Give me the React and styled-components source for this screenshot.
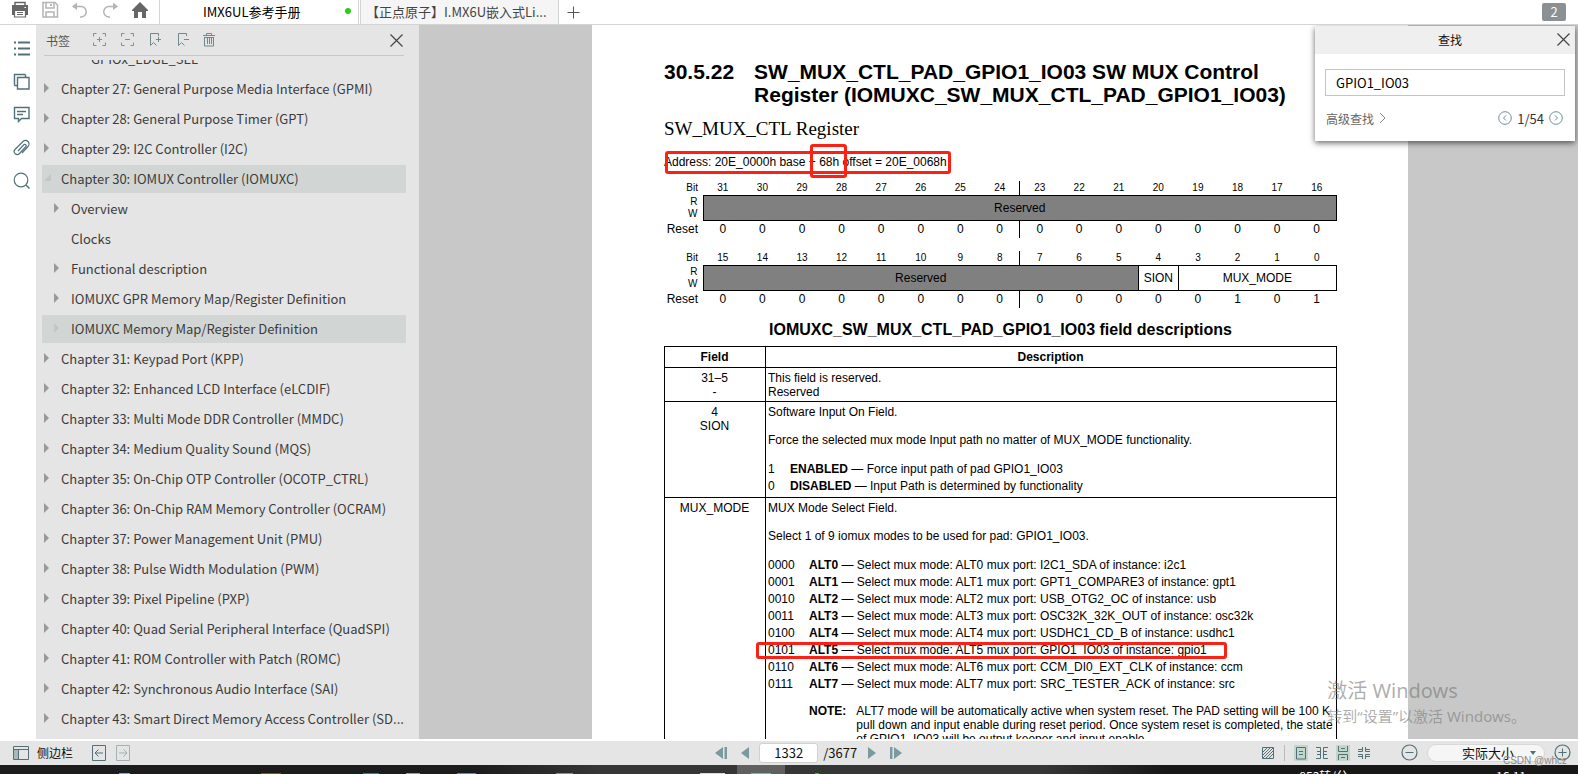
import styled, { createGlobalStyle } from 'styled-components';

const GlobalStyle = createGlobalStyle`
  * { box-sizing: border-box; }

  body {
    margin: 0;
    overflow: hidden;
    font-family: "Noto Sans CJK SC", "Noto Sans", sans-serif;
    font-size: 13px;
    color: #333;
  }

  button, input, select {
    font: inherit;
    color: inherit;
  }

  button {
    display: flex;
    align-items: center;
    justify-content: center;
    padding: 0;
    border: 0;
    background: none;
  }

  svg { display: block; }
`

const Window = styled.div`
  height: 100vh;
  display: flex;
  flex-direction: column;
  overflow: hidden;
  background: #fff;
`

/* top bar */

const TopBar = styled.header`
  flex: none;
  height: 25px;
  display: flex;
  border-bottom: 1px solid #d4d4d4;
  overflow: hidden;
`

const QuickTools = styled.div`
  width: 159px;
  padding-left: 11px;
  display: flex;
  align-items: flex-start;
  gap: 12px;
`

const Tab = styled.button`
  width: ${props => props.$active ? 200 : 199}px;
  height: 24px;
  padding: 0 ${props => props.$active ? 7 : 24}px 2px ${props => props.$active ? 43 : 5}px;
  justify-content: space-between;
  border: solid #d4d4d4;
  border-width: 0 1px;
  color: ${props => props.$active ? '#000' : '#444'};
  background: ${props => props.$active ? '#fff' : '#f5f5f5'};
  margin-right: 1px;
  white-space: nowrap;
`

const UnsavedDot = styled.span`
  width: 6px;
  height: 6px;
  border-radius: 50%;
  background: #2fcc1f;
`

const NewTab = styled.button`
  width: 26px;
  height: 24px;
`

const TabCount = styled.span`
  width: 24px;
  height: 18px;
  margin: 3px 12px 0 auto;
  border-radius: 2px;
  background: #8b9093;
  color: #fff;
  line-height: 18px;
  text-align: center;
`

/* side bar */

const Body = styled.div`
  flex: 1;
  min-height: 0;
  display: flex;
`

const Rail = styled.nav`
  flex: none;
  width: 36px;
  padding: 15px 6px 0 13px;
  display: flex;
  flex-direction: column;
  gap: 16px;
`

const Panel = styled.aside`
  flex: none;
  width: 383px;
  display: flex;
  flex-direction: column;
  background: #e5e5e5;
  color: #3c3c3c;
`

const PanelHeader = styled.div`
  flex: none;
  height: 31px;
  margin: 0 15px 4px 8px;
  padding: 0 1px 0 2px;
  display: flex;
  align-items: center;
  gap: 12px;
  border-bottom: 1px solid #c8c8c8;
`

const PanelTitle = styled.span`
  font-size: 12px;
  color: #555;
  margin-right: 11px;
`

const CloseButton = styled.button`
  margin-left: auto;
`

const Tree = styled.ul`
  flex: 1;
  min-height: 0;
  overflow: hidden;
  margin: 0 13px 0 6px;
  padding: 0;
  list-style: none;
`

const TreeRow = styled.li`
  height: 28px;
  margin-bottom: 2px;
  padding: 0 0 2px ${props => 2 + props.$level * 10}px;
  display: flex;
  align-items: center;
  gap: 12px;
  background: ${props => props.$selected ? '#d1d6d4' : 'none'};

  &:first-child { margin-top: -15px; }
`

const Arrow = styled.svg`
  width: 5px;
  height: 10px;
  flex: none;
  overflow: visible;
  fill: ${props => props.$faint ? '#c2c6c4' : '#999'};
`

const TreeLabel = styled.span`
  white-space: nowrap;
`

/* document */

const Viewer = styled.main`
  flex: 1;
  min-width: 0;
  position: relative;
  padding: 0 3px 0 6px;
  overflow: hidden;
  background: #c8c8c8;
`

const Page = styled.article`
  width: 816px;
  height: 100%;
  margin: 0 auto;
  padding: 35px 71px 0 72px;
  overflow: hidden;
  background: #fff;
  color: #000;
  font-family: "Liberation Sans", Arial, sans-serif;
  font-size: 12px;
  line-height: 14px;
`

const SectionTitle = styled.h1`
  margin: 0;
  display: flex;
  gap: 20px;
  font-size: 21px;
  line-height: 23px;
`

const Subtitle = styled.p`
  margin: 13px 0 0;
  font-family: "Liberation Serif", "Times New Roman", serif;
  font-size: 19px;
  line-height: 20px;
`

const Address = styled.p`
  width: max-content;
  margin: 16px 0 12px;
  position: relative;
`

const Mark = styled.span`
  position: absolute;
  top: ${props => props.$top}px;
  bottom: ${props => props.$bottom}px;
  left: ${props => props.$left}px;
  right: ${props => props.$right}px;
  border: 3px solid #fc2114;
  border-radius: 3px;
`

const MarkedWord = styled.span`
  position: relative;
`

const Register = styled.table`
  width: 100%;
  margin-bottom: 13px;
  table-layout: fixed;
  border-collapse: collapse;
  text-align: center;

  th, td {
    padding: 0;
    font-weight: normal;
  }

  th {
    width: 39px;
    padding-right: 5px;
    text-align: right;
  }
`

const BitRow = styled.tr`
  height: 14px;
  font-size: 10px;
  line-height: 12px;
`

const AccessRow = styled.tr`
  height: 25px;

  th {
    font-size: 10px;
    line-height: 12px;
  }
`

const ResetRow = styled.tr`
  height: 18px;
`

const BitCell = styled.td`
  border-left: ${props => props.$half ? '1px solid #000' : '0'};
`

const FieldCell = styled.td`
  border: 1px solid #000;
  background: ${props => props.$reserved ? '#808080' : '#fff'};
`

const Fields = styled.table`
  width: 100%;
  border-collapse: collapse;

  caption {
    padding: 0 0 7px 0;
    font-size: 16px;
    line-height: 18px;
    font-weight: bold;
  }

  th, td {
    padding: 3px 3px 2px 2px;
    border: 1px solid #000;
    vertical-align: top;
  }

  th {
    padding-bottom: 3px;
  }

  th:first-child, td:first-child {
    width: 101px;
    text-align: center;
  }
`

const Para = styled.p`
  margin: 0 0 14px;
`

const Values = styled.dl`
  margin: 0;
  line-height: 17px;

  dt {
    width: ${props => props.$code}px;
  }

  dd { margin: 0; }
`

const ValueRow = styled.div`
  width: max-content;
  display: flex;
  position: relative;
`

const Note = styled.div`
  margin: 11px 0 0 41px;
  display: flex;
  gap: 10px;
  white-space: nowrap;
`

/* search box */

const FindBox = styled.section`
  position: absolute;
  top: 1px;
  right: 3px;
  width: 260px;
  background: #fff;
  box-shadow: 0 2px 6px rgba(0, 0, 0, .6);
`

const FindHeader = styled.div`
  height: 28px;
  padding: 0 5px 2px 15px;
  display: grid;
  grid-template-columns: 1fr auto 1fr;
  align-items: center;
  background: #efefef;
  font-size: 12px;
  color: #111;

  button { justify-self: end; }
`

const FindInput = styled.input`
  display: block;
  width: 240px;
  height: 27px;
  margin: 15px 10px 14px;
  padding: 0 10px;
  border: 1px solid #c4c4c4;
  outline: 0;
  color: #000;
`

const FindFooter = styled.div`
  height: 16px;
  margin: 0 12px 15px 11px;
  display: flex;
  align-items: center;
  gap: 5px;
`

const AdvancedLink = styled.a`
  margin-right: auto;
  display: flex;
  align-items: center;
  gap: 5px;
  font-size: 12px;
  color: #666;
  text-decoration: none;
`

/* bottom */

const StatusBar = styled.footer`
  flex: none;
  height: 26px;
  padding-bottom: 1px;
  border-top: 2px solid #fff;
  display: grid;
  grid-template-columns: 53fr auto 50fr;
  align-items: center;
  background: #e5e5e5;
  color: #111;
`

const StatusGroup = styled.div`
  display: flex;
  align-items: center;
  justify-content: ${props => props.$end ? 'flex-end' : 'flex-start'};
  gap: ${props => props.$gap}px;
  padding: 0 ${props => props.$right || 0}px 0 ${props => props.$left || 0}px;
  font-size: ${props => props.$small ? 12 : 13}px;
`

const PageInput = styled.input`
  width: 59px;
  height: 20px;
  padding: 0;
  border: 1px solid #d0d0d0;
  border-radius: 3px;
  outline: 0;
  background: #fff;
  text-align: center;
`

const ViewButton = styled.button`
  width: 14px;
  height: 16px;
  background: ${props => props.$on ? '#c3d6cb' : 'none'};
`

const Divider = styled.span`
  width: 1px;
  height: 16px;
  margin: 0 2px;
  background: #bbb;
`

const ZoomField = styled.div`
  position: relative;
`

const ZoomSelect = styled.select`
  width: 118px;
  height: 18px;
  padding: 0 10px 0 34px;
  border: 1px solid #d8d8d8;
  border-radius: 9px;
  background: #f6f6f6;
  appearance: none;
  line-height: 16px;
`

const ZoomArrow = styled.svg`
  position: absolute;
  top: 8px;
  right: 9px;
  fill: #527077;
  pointer-events: none;
`

const TaskBar = styled.div`
  flex: none;
  height: 9px;
  display: flex;
  align-items: flex-end;
  overflow: hidden;
  background: linear-gradient(90deg, #1c1c1c 30%, #363636 38%, #363636 66%, #171717 74%);
`

const TaskIcon = styled.span`
  width: ${props => props.$width}px;
  height: 1px;
  margin-left: ${props => props.$gap}px;
  background: ${props => props.$color};
`

const ActiveTask = styled.span`
  width: 48px;
  height: 9px;
  margin-left: 12px;
  padding: 8px 14px 0;
  background: #606060;

  &::after {
    content: "";
    display: block;
    height: 1px;
    background: #5fc795;
  }
`

const Tray = styled.div`
  align-self: flex-start;
  margin: 3px 52px 0 auto;
  display: flex;
  gap: 148px;
  color: #fff;
  font-size: 12px;
  line-height: 16px;
`

const Activation = styled.div`
  position: absolute;
  right: 52px;
  bottom: 12px;
  color: rgba(120, 120, 120, .6);
  font-family: "Noto Sans", "Noto Sans CJK SC", sans-serif;
  font-size: 15px;
  line-height: 22px;

  strong {
    display: block;
    font-weight: normal;
    font-size: 20px;
    line-height: 28px;
  }
`

const Credit = styled.span`
  position: absolute;
  right: 11px;
  bottom: 6px;
  color: #8a8a8a;
  font-family: "Liberation Sans", Arial, sans-serif;
  font-size: 10px;
  line-height: 14px;
`

const chapters = [
  { label: 'GPIOx_EDGE_SEL', level: 3, leaf: true },
  { label: 'Chapter 27: General Purpose Media Interface (GPMI)' },
  { label: 'Chapter 28: General Purpose Timer (GPT)' },
  { label: 'Chapter 29: I2C Controller (I2C)' },
  { label: 'Chapter 30: IOMUX Controller (IOMUXC)', open: true, selected: true },
  { label: 'Overview', level: 1 },
  { label: 'Clocks', level: 1, leaf: true },
  { label: 'Functional description', level: 1 },
  { label: 'IOMUXC GPR Memory Map/Register Definition', level: 1 },
  { label: 'IOMUXC Memory Map/Register Definition', level: 1, selected: true },
  { label: 'Chapter 31: Keypad Port (KPP)' },
  { label: 'Chapter 32: Enhanced LCD Interface (eLCDIF)' },
  { label: 'Chapter 33: Multi Mode DDR Controller (MMDC)' },
  { label: 'Chapter 34: Medium Quality Sound (MQS)' },
  { label: 'Chapter 35: On-Chip OTP Controller (OCOTP_CTRL)' },
  { label: 'Chapter 36: On-Chip RAM Memory Controller (OCRAM)' },
  { label: 'Chapter 37: Power Management Unit (PMU)' },
  { label: 'Chapter 38: Pulse Width Modulation (PWM)' },
  { label: 'Chapter 39: Pixel Pipeline (PXP)' },
  { label: 'Chapter 40: Quad Serial Peripheral Interface (QuadSPI)' },
  { label: 'Chapter 41: ROM Controller with Patch (ROMC)' },
  { label: 'Chapter 42: Synchronous Audio Interface (SAI)' },
  { label: 'Chapter 43: Smart Direct Memory Access Controller (SD...' }
]

const muxModes = [
  ['0000', 'ALT0', 'I2C1_SDA of instance: i2c1'],
  ['0001', 'ALT1', 'GPT1_COMPARE3 of instance: gpt1'],
  ['0010', 'ALT2', 'USB_OTG2_OC of instance: usb'],
  ['0011', 'ALT3', 'OSC32K_32K_OUT of instance: osc32k'],
  ['0100', 'ALT4', 'USDHC1_CD_B of instance: usdhc1'],
  ['0101', 'ALT5', 'GPIO1_IO03 of instance: gpio1', true],
  ['0110', 'ALT6', 'CCM_DI0_EXT_CLK of instance: ccm'],
  ['0111', 'ALT7', 'SRC_TESTER_ACK of instance: src']
]

const tasks = [
  { gap: 119, width: 11, color: '#4fc3d0' },
  { gap: 131, width: 20, color: '#e0202c' },
  { gap: 82, width: 16, color: '#1787b8' },
  { gap: 27, width: 14, color: '#9a9a9a' },
  { gap: 37, width: 19, color: '#3d8fe8' },
  { gap: 80, width: 17, color: '#8d8d8d' },
  { gap: 127, width: 25, color: '#d8d8d8' }
]

function Icon ({ w = 17, h = 17, color = '#527077', children }) {
  return (
    <svg width={w} height={h} viewBox={`0 0 ${w} ${h}`} fill='none' stroke={color} aria-hidden='true'>
      {children}
    </svg>
  )
}

function Cross () {
  return <Icon w={13} h={13} color='#444'><path d='M.5 .5l12 12M12.5 .5l-12 12' strokeWidth='1.2' /></Icon>
}

function TopTools () {
  return (
    <QuickTools>
      <button aria-label='Print'>
        <Icon w={18} h={19} color='#666'>
          <path d='M4 5V2.500H14V5' strokeWidth='1.500' />
          <path d='M1 5H17V15H15V10H3V15H1z' fill='#666' stroke='none' />
          <path d='M3.500 10.500H14.500V17H3.500zM6 12.500H12M6 14.500H12' strokeWidth='1.200' />
          <path d='M13.500 7.500H15' stroke='#fff' />
        </Icon>
      </button>
      <button aria-label='Save'>
        <Icon w={18} h={19} color='#b4b4b4'>
          <path d='M2 2.500H14L16.500 5V17H2z' strokeWidth='1.500' />
          <path d='M5 2V8H13V2M5 17V12H13V17' strokeWidth='1.500' />
          <path d='M10 4V6' strokeWidth='2' />
        </Icon>
      </button>
      <button aria-label='Undo'>
        <Icon w={18} h={19} color='#b4b4b4'>
          <path d='M2 6.500H10A5 5 0 0 1 10 17H9' strokeWidth='1.500' />
          <path d='M6 2.500V10L1 6.500z' fill='#b4b4b4' stroke='none' />
        </Icon>
      </button>
      <button aria-label='Redo'>
        <Icon w={18} h={19} color='#b4b4b4'>
          <path d='M16 6.500H8A5 5 0 0 0 8 17H9' strokeWidth='1.500' />
          <path d='M12 2.500V10L17 6.500z' fill='#b4b4b4' stroke='none' />
        </Icon>
      </button>
      <button aria-label='Home'>
        <Icon w={18} h={19}>
          <path d='M9 2L17 10V11H15V18H11V12H7V18H3V11H1V10z' fill='#666' stroke='none' />
        </Icon>
      </button>
    </QuickTools>
  )
}

function SideRail () {
  return (
    <Rail>
      <button aria-label='Bookmarks'>
        <Icon><path d='M5 2.500H17M5 8.500H17M5 14.500H17M1 2.500H3M1 8.500H3M1 14.500H3' strokeWidth='1.800' /></Icon>
      </button>
      <button aria-label='Thumbnails'>
        <Icon><path d='M1.500 12.500V1.500H12.500M1.500 12.500H4M12.500 1.500V4M4.500 4.500H16V16H4.500z' strokeWidth='1.400' /></Icon>
      </button>
      <button aria-label='Comments'>
        <Icon><path d='M1.500 1.500H16V12.500H8.500L5.500 15.500V12.500H1.500zM4 5.500H13M4 8.500H10' strokeWidth='1.400' /></Icon>
      </button>
      <button aria-label='Attachments'>
        <Icon><path d='M5 12L11 5.500A1.500 1.500 0 0 1 13 7.500L6.500 14.500A3 3 0 0 1 2 10.500L10 2.500A3.500 3.500 0 0 1 15 7.500L9 14' strokeWidth='1.200' /></Icon>
      </button>
      <button aria-label='Search'>
        <Icon><circle cx='8' cy='8' r='6.800' strokeWidth='1.200' /><path d='M13 13L16.500 16.500' strokeWidth='1.500' /></Icon>
      </button>
    </Rail>
  )
}

const corners = 'M.5 3.500V.5H3.500M9.500 .5H12.500V3.500M12.500 9.500V12.500H9.500M3.500 12.500H.5V9.500'

function Bookmarks () {
  return (
    <Panel>
      <PanelHeader>
        <PanelTitle>书签</PanelTitle>
        <button aria-label='Expand all'>
          <Icon w={16} h={14} color='#7a9296'><path d={corners + 'M6.500 4V9M4 6.500H9'} /></Icon>
        </button>
        <button aria-label='Collapse all'>
          <Icon w={16} h={14} color='#7a9296'><path d={corners + 'M4 6.500H9'} /></Icon>
        </button>
        <button aria-label='Add bookmark'>
          <Icon w={16} h={14} color='#6f898d'><path d='M9.500 3V.5H1.500V12.500L4.500 9.500L7.500 12.500M9.500 4V9M7 6.500H12' /></Icon>
        </button>
        <button aria-label='Remove bookmark'>
          <Icon w={14} h={14} color='#6f898d'><path d='M9.500 3V.5H1.500V12.500L4.500 9.500L7.500 12.500M7 6.500H12' /></Icon>
        </button>
        <button aria-label='Delete'>
          <Icon w={12} h={14} color='#6f898d'><path d='M0 2.500H12M3.500 2V.5H8.500V2M1.500 5V13H10.500V5M4.500 5V11M6.500 5V11M8.500 5V11M1 4.500H11' /></Icon>
        </button>
        <CloseButton aria-label='Close'><Cross /></CloseButton>
      </PanelHeader>
      <Tree>
        {chapters.map(({ label, level = 0, leaf, open, selected }) => (
          <TreeRow key={label} $level={level} $selected={selected}>
            <Arrow $faint={selected} viewBox='0 0 5 10'>
              {!leaf && !open && <path d='M0 0L5 5L0 10z' />}
              {open && <path d='M7 1V8H0z' />}
            </Arrow>
            <TreeLabel>{label}</TreeLabel>
          </TreeRow>
        ))}
      </Tree>
    </Panel>
  )
}

function RegisterHalf ({ high, fields, reset }) {
  const bits = [...Array(16)].map((_, i) => high - i)

  return (
    <Register>
      <tbody>
        <BitRow>
          <th scope='row'>Bit</th>
          {bits.map((bit, i) => <BitCell key={bit} $half={i === 8}>{bit}</BitCell>)}
        </BitRow>
        <AccessRow>
          <th scope='row'>R<br />W</th>
          {fields.map(({ name, span, reserved }) => (
            <FieldCell key={name} colSpan={span} $reserved={reserved}>{name}</FieldCell>
          ))}
        </AccessRow>
        <ResetRow>
          <th scope='row'>Reset</th>
          {bits.map((bit, i) => <BitCell key={bit} $half={i === 8}>{reset[i]}</BitCell>)}
        </ResetRow>
      </tbody>
    </Register>
  )
}

function FieldTable () {
  return (
    <Fields>
      <caption>IOMUXC_SW_MUX_CTL_PAD_GPIO1_IO03 field descriptions</caption>
      <thead>
        <tr><th>Field</th><th>Description</th></tr>
      </thead>
      <tbody>
        <tr>
          <td>31–5<br />-</td>
          <td>This field is reserved.<br />Reserved</td>
        </tr>
        <tr>
          <td>4<br />SION</td>
          <td>
            <Para>Software Input On Field.</Para>
            <Para>Force the selected mux mode Input path no matter of MUX_MODE functionality.</Para>
            <Values $code={22}>
              <ValueRow><dt>1</dt><dd><b>ENABLED</b> — Force input path of pad GPIO1_IO03</dd></ValueRow>
              <ValueRow><dt>0</dt><dd><b>DISABLED</b> — Input Path is determined by functionality</dd></ValueRow>
            </Values>
          </td>
        </tr>
        <tr>
          <td>MUX_MODE</td>
          <td>
            <Para>MUX Mode Select Field.</Para>
            <Para>Select 1 of 9 iomux modes to be used for pad: GPIO1_IO03.</Para>
            <Values $code={41}>
              {muxModes.map(([code, mode, port, marked]) => (
                <ValueRow key={code}>
                  <dt>{code}</dt>
                  <dd><b>{mode}</b> — Select mux mode: {mode} mux port: {port}</dd>
                  {marked && <Mark $top={0} $bottom={0} $left={-12} $right={-20} />}
                </ValueRow>
              ))}
            </Values>
            <Note>
              <b>NOTE:</b>
              <span>
                ALT7 mode will be automatically active when system reset. The PAD setting will be 100 K<br />
                pull down and input enable during reset period. Once system reset is completed, the state<br />
                of GPIO1_IO03 will be output keeper and input enable.
              </span>
            </Note>
          </td>
        </tr>
      </tbody>
    </Fields>
  )
}

function Find () {
  return (
    <FindBox>
      <FindHeader>
        <span />
        <label htmlFor='find'>查找</label>
        <button aria-label='Close'><Cross /></button>
      </FindHeader>
      <FindInput id='find' defaultValue='GPIO1_IO03' />
      <FindFooter>
        <AdvancedLink href='#advanced'>
          高级查找
          <Icon w={7} h={12} color='#888'><path d='M1 1L6 6L1 11' /></Icon>
        </AdvancedLink>
        <button aria-label='Previous'>
          <Icon w={14} h={14} color='#6f9094'><circle cx='7' cy='7' r='6.300' /><path d='M8 4.500L5.500 7L8 9.500' /></Icon>
        </button>
        <span>1/54</span>
        <button aria-label='Next'>
          <Icon w={14} h={14} color='#6f9094'><circle cx='7' cy='7' r='6.300' /><path d='M6 4.500L8.500 7L6 9.500' /></Icon>
        </button>
      </FindFooter>
    </FindBox>
  )
}

function Status () {
  return (
    <StatusBar>
      <StatusGroup $left={13} $gap={8} $small>
        <Icon w={16} h={14}><path d='M.5 .5H15.500V13.500H.5zM.5 3.500H15.500M5.500 3.500V13.500' /><path d='M1 4H5V13H1z' fill='#a9b9bb' stroke='none' /></Icon>
        <span>侧边栏</span>
        <button aria-label='Back'>
          <Icon w={26} h={16}><path d='M11.500 .5H24.500V15.500H11.500zM14 8H22M17.500 4.500L14 8L17.500 11.500' /></Icon>
        </button>
        <button aria-label='Forward'>
          <Icon w={16} h={16} color='#a3b1b3'><path d='M1.500 .5H14.500V15.500H1.500zM4 8H12M8.500 4.500L12 8L8.500 11.500' /></Icon>
        </button>
      </StatusGroup>
      <StatusGroup $gap={10}>
        <button aria-label='First page'>
          <Icon w={12} h={12}><path d='M8 0V12L0 6zM9.500 0H12V12H9.500z' fill='#7b9a9f' stroke='none' /></Icon>
        </button>
        <button aria-label='Previous page'>
          <Icon w={12} h={12}><path d='M12 0V12L4 6z' fill='#7b9a9f' stroke='none' /></Icon>
        </button>
        <StatusGroup $gap={5}>
          <PageInput aria-label='Page' defaultValue='1332' />
          <span>/3677</span>
        </StatusGroup>
        <button aria-label='Next page'>
          <Icon w={12} h={12}><path d='M1 0V12L9 6z' fill='#7b9a9f' stroke='none' /></Icon>
        </button>
        <button aria-label='Last page'>
          <Icon w={14} h={12}><path d='M5 0V12L13 6zM1 0H3.500V12H1z' fill='#7b9a9f' stroke='none' /></Icon>
        </button>
      </StatusGroup>
      <StatusGroup $gap={7} $right={7} $end $small>
        <ViewButton aria-label='Background'>
          <Icon w={12} h={12}><path d='M.5 .5H11.500V11.500H.5zM1 5L5 1M1 8L8 1M1 11L11 1M4 11L11 4M7 11L11 7' /></Icon>
        </ViewButton>
        <Divider />
        <ViewButton $on aria-label='Single page'>
          <Icon w={14} h={14}><path d='M2.500 1.500H11.500V13H2.500zM5 5.500H9M5 8.500H9' /></Icon>
        </ViewButton>
        <ViewButton aria-label='Facing pages'>
          <Icon w={12} h={12}><path d='M0 .5H4.500V11.500H0M1 4.500H4M1 7.500H4M12 .5H7.500V11.500H12M8 4.500H11M8 7.500H11' /></Icon>
        </ViewButton>
        <ViewButton $on aria-label='Continuous'>
          <Icon w={14} h={14}><path d='M2.500 0V5.500H11.500V0M5 2.500H9M2.500 14V8.500H11.500V14M5 11.500H9' /></Icon>
        </ViewButton>
        <ViewButton aria-label='Continuous facing'>
          <Icon w={12} h={12}><path d='M0 4.500H4.500V0M0 2.500H4M12 4.500H7.500V0M8 2.500H12M0 7.500H4.500V12M0 9.500H4M12 7.500H7.500V12M8 9.500H12' /></Icon>
        </ViewButton>
        <StatusGroup $gap={9} $left={23}>
          <button aria-label='Zoom out'>
            <Icon w={17} h={17}><circle cx='8.500' cy='8.500' r='7.500' strokeWidth='1.200' /><path d='M4.500 8.500H12.500' /></Icon>
          </button>
          <ZoomField>
            <ZoomSelect aria-label='Zoom' defaultValue='actual'>
              <option value='actual'>实际大小</option>
            </ZoomSelect>
            <ZoomArrow width='6' height='4' viewBox='0 0 6 4'><path d='M0 0H6L3 4z' /></ZoomArrow>
          </ZoomField>
          <button aria-label='Zoom in'>
            <Icon w={17} h={17}><circle cx='8.500' cy='8.500' r='7.500' strokeWidth='1.200' /><path d='M4.500 8.500H12.500M8.500 4.500V12.500' /></Icon>
          </button>
        </StatusGroup>
      </StatusGroup>
    </StatusBar>
  )
}

export default function App () {
  return (
    <Window>
      <GlobalStyle />
      <TopBar>
        <TopTools />
        <Tab $active>IMX6UL参考手册<UnsavedDot /></Tab>
        <Tab>【正点原子】I.MX6U嵌入式Li...</Tab>
        <NewTab aria-label='New tab'>
          <Icon w={13} h={13} color='#555'><path d='M6.500 .5V12.500M.5 6.500H12.500' /></Icon>
        </NewTab>
        <TabCount>2</TabCount>
      </TopBar>
      <Body>
        <SideRail />
        <Bookmarks />
        <Viewer>
          <Page>
            <SectionTitle>
              <span>30.5.22</span>
              <span>
                SW_MUX_CTL_PAD_GPIO1_IO03 SW MUX Control<br />
                Register (IOMUXC_SW_MUX_CTL_PAD_GPIO1_IO03)
              </span>
            </SectionTitle>
            <Subtitle>SW_MUX_CTL Register</Subtitle>
            <Address>
              Address: 20E_0000h base{' '}
              <MarkedWord>+ 68h<Mark $top={-11} $bottom={-9} $left={1} $right={-8} /></MarkedWord>
              {' '}offset = 20E_0068h
              <Mark $top={-4} $bottom={-5} $left={1} $right={-4} />
            </Address>
            <RegisterHalf
              high={31}
              fields={[{ name: 'Reserved', span: 16, reserved: true }]}
              reset='0000000000000000'
            />
            <RegisterHalf
              high={15}
              fields={[
                { name: 'Reserved', span: 11, reserved: true },
                { name: 'SION', span: 1 },
                { name: 'MUX_MODE', span: 4 }
              ]}
              reset='0000000000000101'
            />
            <FieldTable />
          </Page>
          <Find />
          <Activation><strong>激活 Windows</strong>转到“设置”以激活 Windows。</Activation>
        </Viewer>
      </Body>
      <Status />
      <TaskBar>
        {tasks.map(({ gap, width, color }) => <TaskIcon key={color} $gap={gap} $width={width} $color={color} />)}
        <ActiveTask />
        <TaskIcon $gap={30} $width={4} $color='#22c322' />
        <Tray><span>853转/分</span><span>16:11</span></Tray>
      </TaskBar>
      <Credit>CSDN @whcz</Credit>
    </Window>
  )
}
